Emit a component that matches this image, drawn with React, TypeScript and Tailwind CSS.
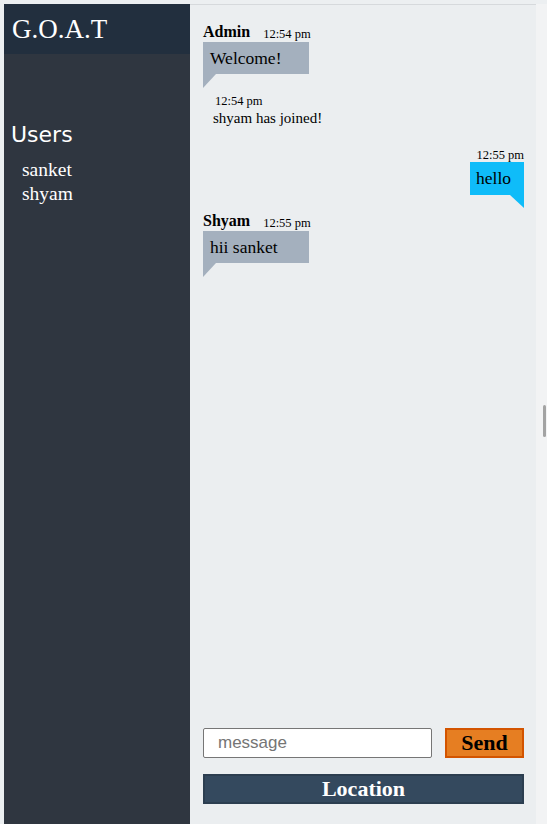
const serif = { fontFamily: '"Liberation Serif", "Times New Roman", serif' };

type Msg = {
  name: string;
  time: string;
  text: string;
};

const LeftMessage = ({ name, time, text }: Msg) => (
  <div className="flex flex-col items-start">
    <div className="flex h-[18px] items-end gap-[13px] leading-none">
      <span className="text-[16px] font-bold">{name}</span>
      <span className="text-[12.5px]">{time}</span>
    </div>
    <div className="mt-[2px] h-[32px] w-[106px] bg-[#a4b0be] pl-[7px] pt-[5px] text-[17.5px] leading-[22px]">
      {text}
    </div>
    <div className="h-0 w-0 border-r-[13px] border-t-[14px] border-r-transparent border-t-[#a4b0be]" />
  </div>
);

const App = () => {
  return (
    <div
      className="flex h-screen w-full bg-[#eceff1] pl-[4px] pt-[4px] text-black"
      style={serif}
    >
      <aside className="flex w-[186px] shrink-0 flex-col bg-[#2f3640] text-white">
        <div className="flex h-[50px] items-center bg-[#222f3e] px-[8px] text-[27px] leading-none">
          G.O.A.T
        </div>
        <h2
          className="mt-[66px] px-[7px] text-[22px] leading-[30px]"
          style={{ fontFamily: '"Comic Sans MS", "DejaVu Sans", sans-serif' }}
        >
          Users
        </h2>
        <ul className="mt-[8px] px-[18px] text-[19.5px] leading-[24px]">
          <li>sanket</li>
          <li>shyam</li>
        </ul>
      </aside>

      <main className="flex flex-1 flex-col border-t border-[#d6d9dc] bg-[#ebeef0]">
        <div className="flex flex-1 flex-col pl-[13px] pr-[12px] pt-[17px]">
          <LeftMessage name="Admin" time="12:54 pm" text="Welcome!" />

          <div className="mt-[5px] flex flex-col pl-[10px] leading-none">
            <span className="ml-[2px] h-[16px] pt-[2px] text-[12.5px]">12:54 pm</span>
            <span className="mt-[2px] text-[15px]">shyam has joined!</span>
          </div>

          <div className="mt-[17px] flex flex-col items-end">
            <span className="flex h-[18px] items-end text-[12.5px] leading-none">12:55 pm</span>
            <div className="mt-[1px] h-[33px] bg-[#0fbcf9] pl-[6px] pr-[13px] pt-[5px] text-[17.5px] leading-[22px]">
              hello
            </div>
            <div className="h-0 w-0 border-l-[14px] border-t-[13px] border-l-transparent border-t-[#0fbcf9]" />
          </div>

          <div className="mt-[3px]">
            <LeftMessage name="Shyam" time="12:55 pm" text="hii sanket" />
          </div>
        </div>

        <div className="flex flex-col gap-[16px] pb-[20px] pl-[13px] pr-[12px]">
          <div className="flex items-center gap-[13px]">
            <input
              type="text"
              placeholder="message"
              className="h-[30px] w-[229px] rounded-[2px] border border-[#767676] bg-white px-[14px] text-[17px] placeholder:text-[#757575]"
              style={{ fontFamily: '"Liberation Sans", Arial, sans-serif' }}
            />
            <button
              type="button"
              className="h-[30px] flex-1 border-2 border-[#d35400] bg-[#e67e22] text-[22px] font-bold leading-none"
            >
              Send
            </button>
          </div>
          <button
            type="button"
            className="h-[30px] w-full border-2 border-[#2c3e50] bg-[#34495e] text-[22px] font-bold leading-none text-white"
          >
            Location
          </button>
        </div>
      </main>

      <div className="flex w-[11px] shrink-0 flex-col items-end bg-[#f2f3f4] pr-[1px] pt-[401px]">
        <div className="h-[32px] w-[3px] rounded-full bg-[#a3a3a3]" />
      </div>
    </div>
  );
};

export default App;
